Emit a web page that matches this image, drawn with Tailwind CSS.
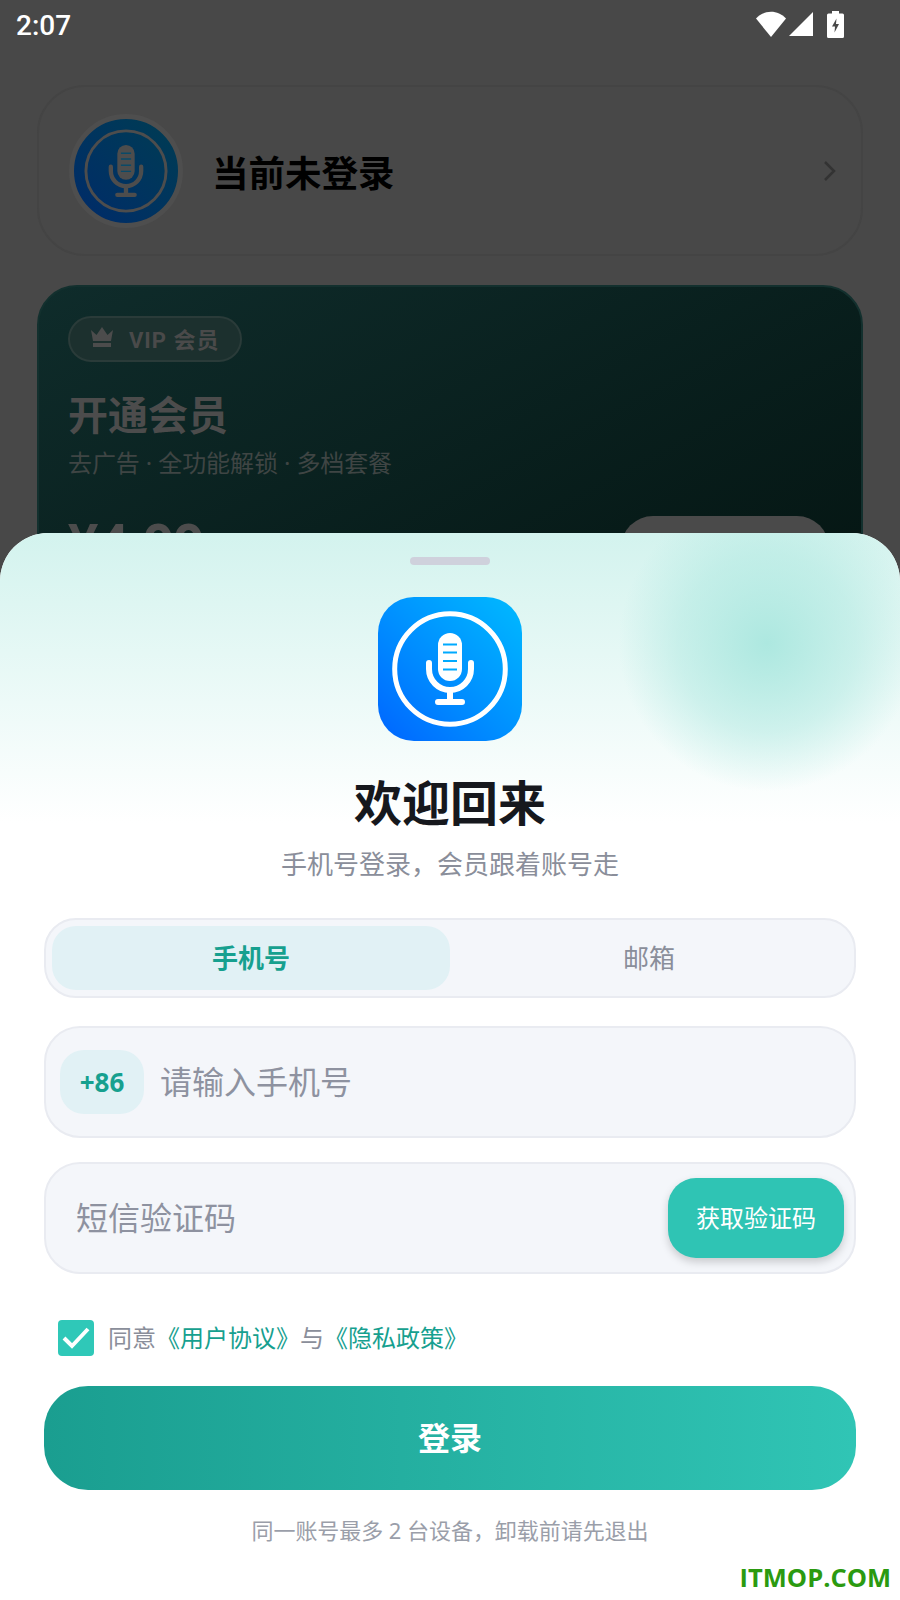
<!DOCTYPE html>
<html lang="zh-CN">
<head>
  <meta charset="UTF-8">
  <meta name="viewport" content="width=device-width, initial-scale=1.0">
  <title>登录</title>
  <script src="https://cdn.jsdelivr.net/npm/@tailwindcss/browser@4"></script>
</head>
<body class="bg-[#484848] font-['Noto_Sans','Noto_Sans_CJK_SC',sans-serif]">
  <div class="relative w-[900px] h-[1600px] overflow-hidden bg-[#484848]">

    <!-- status bar -->
    <div class="h-[50px] flex items-center justify-between pl-4 pr-[56px] text-white">
      <span class="font-['Roboto',sans-serif] font-medium text-[28px] leading-none pt-[1px]">2:07</span>
      <div class="flex items-center -mt-[2px]">
        <svg width="30" height="26" viewBox="0 0 30 26" fill="#fff"><path d="M0 7.500C8-1.500 22-1.500 30 7.500L15 26Z"/></svg>
        <svg class="ml-[2px]" width="26" height="26" viewBox="0 0 26 26" fill="#fff"><path d="M25 1V25H1Z"/></svg>
        <svg class="ml-[13px]" width="17" height="27" viewBox="0 0 17 27"><path fill="#fff" fill-rule="evenodd" d="M5 0H12V2.500H15.500Q17 2.500 17 4V25.500Q17 27 15.500 27H1.500Q0 27 0 25.500V4Q0 2.500 1.500 2.500H5ZM9.500 7.500 5 15.500H8L7.500 21.500 12 13H9Z"/></svg>
      </div>
    </div>

    <!-- page behind the sheet -->
    <div class="px-[37px] pt-[35px]">
      <div class="h-[171px] rounded-[48px] border-2 border-[#444444] flex items-center pl-[30px] pr-[24px]">
        <div class="size-[114px] shrink-0 rounded-full border-[5px] border-[#4e4e4e] bg-gradient-to-tr from-[#002a6a] to-[#003c52] flex items-center justify-center">
          <svg width="104" height="104" viewBox="0 0 144 144" fill="none" stroke="#4d4d4d">
            <circle cx="72" cy="72" r="55.500" stroke-width="4"/>
            <rect x="60" y="36" width="24" height="48" rx="12" fill="#4d4d4d" stroke="none"/>
            <path d="M65 47.500H79M65 55.500H79M65 64H79M65 72.500H79" stroke="#0a4a68" stroke-width="2"/>
            <path d="M51 66V72A21 21 0 0 0 93 72V66" stroke-width="6" stroke-linecap="round"/>
            <path d="M72 94V105M60 105H84" stroke-width="6" stroke-linecap="round"/>
          </svg>
        </div>
        <span class="ml-[29px] pt-[5px] text-[36.500px] font-bold text-black leading-none">当前未登录</span>
        <svg class="ml-auto" width="14" height="22" viewBox="0 0 14 22" fill="none" stroke="#333333" stroke-width="2.500"><path d="M2 2 11 11 2 20"/></svg>
      </div>

      <div class="mt-[29px] h-[440px] rounded-[40px] border-2 border-[#13302e] bg-gradient-to-br from-[#0f2c2b] to-[#04120f] pl-[29px] pr-[34px] pt-[29px]">
        <div class="inline-flex items-center h-[46px] w-[174px] rounded-full border-2 border-[#2a3b39] bg-[#1c302e] pl-[21px]">
          <svg class="-mt-[4px]" width="22" height="20" viewBox="0 0 22 20" fill="#4c4c4c"><path d="M0 3 5.500 8 11 0 16.500 8 22 3 20 14H2ZM2 16H20V20H2Z"/></svg>
          <span class="ml-[16px] pt-[3px] font-['Roboto','Noto_Sans_CJK_SC',sans-serif] text-[22px] font-bold text-[#4a4a4a] leading-none tracking-[1px]">VIP 会员</span>
        </div>
        <p class="mt-[31px] text-[40px] font-bold text-[#4c4c4c] leading-[44px]">开通会员</p>
        <p class="mt-[9px] text-[24px] text-[#3f4544] leading-[34px] whitespace-nowrap tracking-[-0.1px]">去广告 · 全功能解锁 · 多档套餐</p>
        <div class="mt-[31px] flex items-start justify-between">
          <span class="text-[53px] font-bold text-[#4c4c4c] leading-[64px]">¥4.99</span>
          <div class="mt-[5px] -mr-[2px] w-[208px] h-[70px] rounded-[32px] bg-[#4a4a4a]"></div>
        </div>
      </div>
    </div>

    <!-- login sheet -->
    <div class="absolute left-0 right-0 top-[533px] bottom-0 rounded-t-[48px] overflow-hidden bg-white">
      <div class="absolute inset-x-0 top-0 h-[290px] bg-gradient-to-b from-[#d3f3ee] to-white"></div>
      <div class="absolute left-[617px] -top-[40px] size-[300px] rounded-full bg-[radial-gradient(circle,#ade8e0_0%,rgba(173,232,224,0.5)_42%,rgba(173,232,224,0)_70%)]"></div>

      <div class="relative flex flex-col items-center px-[44px]">
        <div class="mt-[24px] w-[80px] h-[8px] rounded-full bg-[#cfd1dc]"></div>

        <div class="mt-[32px] size-[144px] rounded-[36px] bg-gradient-to-tr from-[#0064ff] to-[#00baff]">
          <svg width="144" height="144" viewBox="0 0 144 144" fill="none" stroke="#fff">
            <circle cx="72" cy="72" r="55.300" stroke-width="5"/>
            <rect x="60" y="36" width="24" height="48" rx="12" fill="#fff" stroke="none"/>
            <path d="M65 47.500H79M65 55.500H79M65 64H79M65 72.500H79" stroke="#00aaff" stroke-width="2"/>
            <path d="M51 66V72A21 21 0 0 0 93 72V66" stroke-width="6" stroke-linecap="round"/>
            <path d="M72 94V105M60 105H84" stroke-width="6" stroke-linecap="round"/>
          </svg>
        </div>

        <h1 class="mt-[27px] text-[48px] font-bold text-[#16181d] leading-[70px]">欢迎回来</h1>
        <p class="mt-[8px] text-[26px] text-[#8a8e9a] leading-[36px]">手机号登录，会员跟着账号走</p>

        <!-- tabs -->
        <div class="mt-[36px] w-full h-[80px] rounded-[32px] border-2 border-[#e9ebf1] bg-[#f4f6fa] p-[6px] flex">
          <div class="w-[398px] rounded-[24px] bg-[#e1f1f5] flex items-center justify-center text-[26px] font-bold text-[#16a08f]">手机号</div>
          <div class="w-[398px] flex items-center justify-center text-[26px] text-[#8a8e9a]">邮箱</div>
        </div>

        <!-- phone -->
        <div class="mt-[28px] w-full h-[112px] rounded-[36px] border-2 border-[#e9ebf1] bg-[#f4f6fa] flex items-center pl-[14px]">
          <div class="w-[84px] h-[64px] rounded-[24px] bg-[#e1f1f5] flex items-center justify-center text-[26px] font-bold text-[#16a08f]">+86</div>
          <span class="ml-[16px] text-[32px] text-[#8e92a0]">请输入手机号</span>
        </div>

        <!-- sms code -->
        <div class="mt-[24px] w-full h-[112px] rounded-[36px] border-2 border-[#e9ebf1] bg-[#f4f6fa] flex items-center justify-between pl-[30px] pr-[10px]">
          <span class="text-[32px] text-[#8e92a0]">短信验证码</span>
          <div class="w-[176px] h-[80px] rounded-[28px] bg-[#2fc4b4] shadow-[0_4px_8px_rgba(0,0,0,0.18)] flex items-center justify-center text-[24px] text-white">获取验证码</div>
        </div>

        <!-- agreement -->
        <div class="mt-[46px] w-full flex items-center pl-[14px]">
          <div class="size-[36px] rounded-[4px] bg-[#2fc8b8] flex items-center justify-center">
            <svg width="28" height="24" viewBox="0 0 28 24" fill="none" stroke="#fff" stroke-width="4"><path d="M2 12 10 20 26 3"/></svg>
          </div>
          <p class="ml-[14px] text-[24px] text-[#8a8e9a] leading-[36px] whitespace-nowrap">同意<span class="text-[#16a08f]">《用户协议》</span>与<span class="text-[#16a08f]">《隐私政策》</span></p>
        </div>

        <!-- submit -->
        <div class="mt-[30px] w-full h-[104px] rounded-[44px] bg-gradient-to-r from-[#1a9e90] to-[#30c5b5] flex items-center justify-center text-[32px] font-bold text-white">登录</div>

        <p class="mt-[22px] text-[22px] text-[#9a9ea9] leading-[36px] tracking-[-0.05px]">同一账号最多 2 台设备，卸载前请先退出</p>
      </div>

      <span class="absolute right-[9px] bottom-[10px] font-['Open_Sans',sans-serif] font-bold text-[25.500px] leading-none text-[#2b9a10]">ITMOP.COM</span>
    </div>
  </div>
</body>
</html>
